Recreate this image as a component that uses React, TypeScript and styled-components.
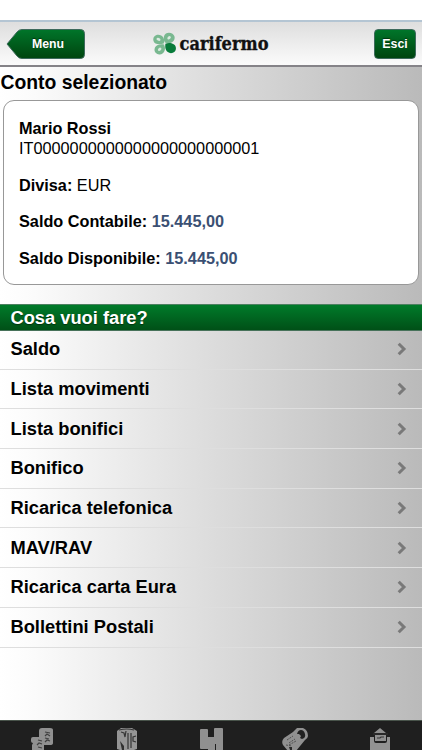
import React from "react";
import styled, { createGlobalStyle } from "styled-components";

const Global = createGlobalStyle`
  * { box-sizing: border-box; }
  html, body { margin: 0; padding: 0; background: #fff; overflow: hidden; }
  body { font-family: "Liberation Sans", Arial, sans-serif; color: #000; }
`;

const Screen = styled.div`
  width: 422px;
  height: 750px;
  padding-top: 20px;
  display: flex;
  flex-direction: column;
  background: #fff;
`;

const TopBar = styled.header`
  flex: none;
  height: 47px;
  display: flex;
  justify-content: space-between;
  align-items: flex-start;
  padding: 7px 6px 0;
  border-top: 2px solid #b4c5d3;
  border-bottom: 2px solid #858388;
  background: linear-gradient(#dedede, #fbfbfb);
`;

const BackButton = styled.button`
  position: relative;
  width: 79px;
  height: 30px;
  border: 0;
  padding: 0 0 0 5px;
  background: none;
  color: #fff;
  font: bold 12.3px "Liberation Sans", Arial, sans-serif;
  text-shadow: 0 -1px 1px #00330d;
`;

const BackShape = styled.svg`
  position: absolute;
  inset: 0;
`;

const Label = styled.span`
  position: relative;
`;

const ExitButton = styled.button`
  width: 42px;
  height: 30px;
  padding: 0;
  border: 1px solid #3e6a5c;
  border-radius: 4px;
  background: linear-gradient(#00752a, #00450f);
  color: #fff;
  font: bold 12.4px "Liberation Sans", Arial, sans-serif;
  text-shadow: 0 -1px 1px #00330d;
`;

const Logo = styled.svg`
  flex: none;
  overflow: visible;
  margin-left: 35px;
  margin-right: 70px;
`;

const Content = styled.main`
  flex: 1;
  min-height: 0;
  display: flex;
  flex-direction: column;
  background: linear-gradient(90deg, #fff 0, #fbfbfb 8%, #dfdfdf 46%, #bababa 100%);
`;

const Title = styled.h1`
  margin: 0;
  height: 33px;
  padding: 3px 0 0 0.5px;
  font-size: 19.35px;
  line-height: 24.5px;
  white-space: nowrap;
`;

const Card = styled.section`
  flex: none;
  height: 185px;
  margin: 0 3px;
  padding: 17px 15px 0;
  border: 1px solid #989898;
  border-radius: 11px;
  background: #fff;
  font-size: 16.25px;
  line-height: 20px;
`;

const Line = styled.div<{ $gap?: number }>`
  margin-top: ${(p) => p.$gap ?? 0}px;
  white-space: nowrap;
`;

const Amount = styled.b`
  color: #3b5073;
`;

const SectionBar = styled.h2`
  flex: none;
  margin: 19px 0 0;
  height: 27px;
  padding-left: 10.5px;
  border-top: 1px solid #4c8060;
  border-bottom: 1px solid #47725a;
  background: linear-gradient(#007b2a, #005017);
  color: #fff;
  font-size: 18.3px;
  line-height: 26px;
  text-shadow: 0 1px 1px #00330d;
`;

const List = styled.ul`
  flex: 1;
  margin: -1px 0 0;
  padding: 0;
  list-style: none;
`;

const Row = styled.li`
  height: 39.7px;
  display: flex;
  align-items: center;
  justify-content: space-between;
  padding: 0 14px 0 10.5px;
  border-bottom: 1px solid #dedede;
  font-size: 18.3px;
  font-weight: bold;
`;

const Tabs = styled.nav`
  flex: none;
  height: 30px;
  display: grid;
  grid-template-columns: repeat(5, 84.4px);
  justify-items: center;
  align-items: end;
  border-top: 1px solid #48534a;
  background: #1f1f1f;
`;

const Chevron = () => (
  <svg width="12" height="14" viewBox="0 0 12 14">
    <path d="M2.700 1.700 8 7 2.700 12.300" fill="none" stroke="#797979" strokeWidth="3" />
  </svg>
);

const Brand = () => (
  <Logo width="120" height="30" viewBox="0 0 120 30">
    <g transform="translate(.7 1.5)">
      <g fill="#79b890">
        <path d="M.8 10.500C-.5 5.500 4.500 2.800 8.500 5c3.300 2 3.300 5.300 2.600 8C7 14.300 1.700 14.200.8 10.500Z" />
        <path d="M12.200 12c-2.500-5-.7-9.800 4-9.800 5.800 0 8 6.300 3.200 9.500-2 1.200-4.900 1.200-7.200.3Z" />
        <path d="M11.300 14c2.700 5.300-.3 10.400-4.800 9.900C1 23.300.3 17.100 4.600 14.700c2-1.100 4.700-1.100 6.700-.7Z" />
      </g>
      <g fill="#dcebe1">
        <ellipse cx="5.800" cy="8.800" rx="2.100" ry="1.400" transform="rotate(25 5.800 8.800)" />
        <ellipse cx="16.400" cy="7.300" rx="2" ry="1.400" transform="rotate(-45 16.400 7.300)" />
        <ellipse cx="7" cy="18.800" rx="2" ry="1.400" transform="rotate(-45 7 18.800)" />
      </g>
      <path d="M12.700 13.300c4.100-1.700 10-.3 10.500 3.900.5 4.700-4.700 6.900-8.100 4.400-2.700-2-2.700-5.200-2.400-8.300Z" fill="#087b3a" />
    </g>
    <text x="27.500" y="20.500" textLength="89" lengthAdjust="spacingAndGlyphs" fill="#111" stroke="#111" strokeWidth=".35" fontFamily="DejaVu Serif, serif" fontWeight="bold" fontSize="18.300">carifermo</text>
  </Logo>
);

const tabIcons = [
  <>
    <path d="M4 16q-2 0-2-2v-2q0-2 2-2h6V4q0-3 3-3h8q3 0 3 2v13q0 2-3 2h-6v5H3v-5Z" fill="#909090" />
    <path d="m16 5 5 1m-5 3 2-2 3 2m-5 2 4 1m-4 3 2-2 3 1M9 13l4 1m-5 4 2-2 3 1m-4 3 4 1" stroke="#404040" strokeWidth="1.200" fill="none" />
  </>,
  <>
    <path d="M3 4 7 1h11l5 3v18l-3 1H6l-3-1Z" fill="#959595" />
    <path d="M5 3q8-2 15 0M7 5l3 1 1 4 1-6m2 2v16m3-16v15m5-12-3 1v4l3 1" stroke="#353535" strokeWidth="1.200" fill="none" />
    <path d="m6 14 4 5v4H8Z" fill="#303030" />
  </>,
  <path d="M2 3q0-1 1-1h6q1 0 1 1v7h6V2q0-1 1-1h7q1 0 1 1v22h-7v-7h-1v7h-7v-2H3q-1 0-1-1Z" fill="#909090" />,
  <>
    <path d="M2 11 11 5l4-4h6q5 2 5 8 0 2-3 4L14 24H6L1 18q-2-4 1-7Z" fill="#909090" />
    <path d="M15 7q1-4 4-4t4 4-3 5l-2-1 1-2-2-2Z" fill="#202020" />
    <path d="m5 13 6-4m-4 7 6-4m-6 6 7-4M4 18l6 1" stroke="#505050" strokeWidth="1" strokeDasharray="2 1" />
    <path d="M7 20h3v3H8Z" fill="#292929" />
  </>,
  <>
    <path d="M3 10h4v4q0 2 2 2h9q2 0 2-2v-4h3v14H3Z" fill="#929292" />
    <path d="m13 1 6 5H7Z M8 8h11v6H8Z" fill="#909090" />
    <path d="M6 7h15M10 11h3l1-1h3" stroke="#353535" strokeWidth="1.200" fill="none" />
  </>,
];

const rows = [
  "Saldo",
  "Lista movimenti",
  "Lista bonifici",
  "Bonifico",
  "Ricarica telefonica",
  "MAV/RAV",
  "Ricarica carta Eura",
  "Bollettini Postali",
];

export default function App() {
  return (
    <Screen>
      <Global />
      <TopBar>
        <BackButton>
          <BackShape width="79" height="30" viewBox="0 0 79 30">
            <defs>
              <linearGradient id="back" x1="0" y1="0" x2="0" y2="1">
                <stop stopColor="#00752a" />
                <stop offset="1" stopColor="#00450f" />
              </linearGradient>
            </defs>
            <path d="M1 15 11 3Q13 .5 16 .5h58.500q4 0 4 4v21q0 4-4 4H16q-3 0-5-2.500Z" fill="url(#back)" stroke="#3e6a5c" />
          </BackShape>
          <Label>Menu</Label>
        </BackButton>
        <Brand />
        <ExitButton>Esci</ExitButton>
      </TopBar>
      <Content>
        <Title>Conto selezionato</Title>
        <Card>
          <Line><b>Mario Rossi</b></Line>
          <Line>IT0000000000000000000000001</Line>
          <Line $gap={17}><b>Divisa:</b> EUR</Line>
          <Line $gap={16}><b>Saldo Contabile:</b> <Amount>15.445,00</Amount></Line>
          <Line $gap={17}><b>Saldo Disponibile:</b> <Amount>15.445,00</Amount></Line>
        </Card>
        <SectionBar>Cosa vuoi fare?</SectionBar>
        <List>
          {rows.map((row) => (
            <Row key={row}>{row}<Chevron /></Row>
          ))}
        </List>
      </Content>
      <Tabs>
        {tabIcons.map((icon, i) => (
          <svg key={i} width="26" height="23" viewBox="0 0 26 23">{icon}</svg>
        ))}
      </Tabs>
    </Screen>
  );
}
